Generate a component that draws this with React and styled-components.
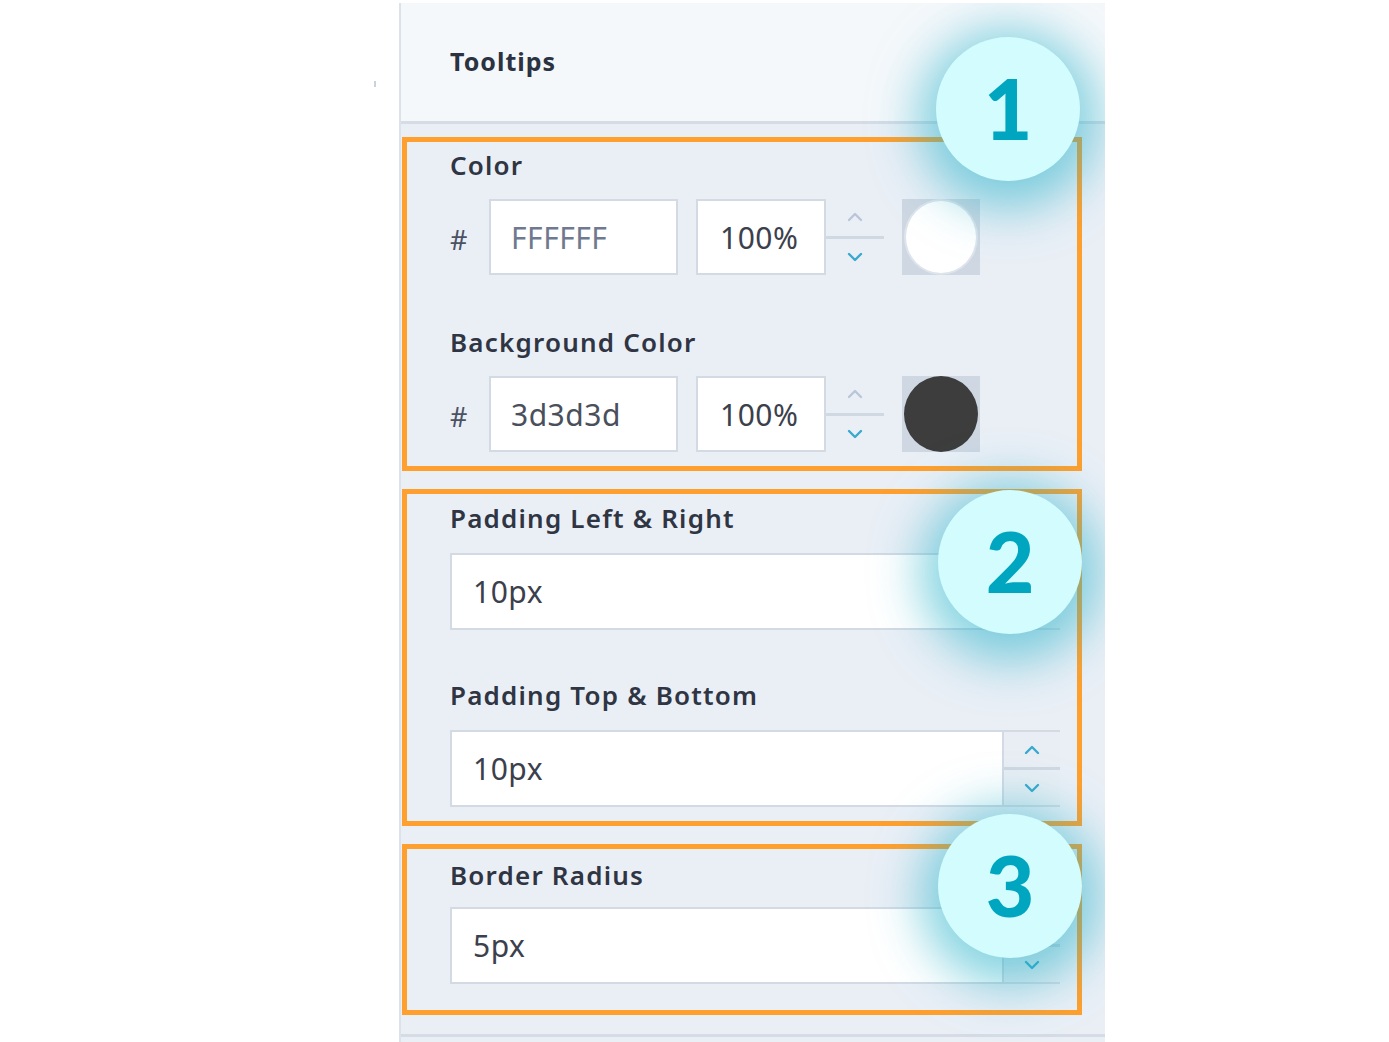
import React from "react";
import styled, { createGlobalStyle } from "styled-components";

const GlobalStyle = createGlobalStyle`
  html, body {
    margin: 0;
    padding: 0;
    background: #ffffff;
  }
  body {
    font-family: "Noto Sans", "DejaVu Sans", sans-serif;
  }
  * {
    box-sizing: border-box;
  }
`;

const Page = styled.div`
  display: flex;
  padding: 3px 0 0 399px;
  min-height: 1042px;
  position: relative;
`;

const StrayMark = styled.span`
  position: absolute;
  left: 374px;
  top: 81px;
  width: 2px;
  height: 6px;
  background: #c9d2de;
`;

const Panel = styled.div`
  position: relative;
  width: 706px;
  height: 1039px;
  border-left: 2px solid #dce2ea;
  background: #eaeff6;
  overflow: hidden;
`;

const Header = styled.div`
  height: 121px;
  display: flex;
  align-items: center;
  padding-left: 49px;
  background: #f5f8fb;
  border-bottom: 3px solid #d5dce6;
`;

const Title = styled.h2`
  margin: 0 0 2px;
  font-size: 25px;
  font-weight: 700;
  letter-spacing: 1px;
  color: #2b3241;
`;

const Body = styled.div`
  display: flex;
  flex-direction: column;
  gap: 18px;
  padding-top: 13px;
`;

const Annot = styled.section`
  margin-left: 1px;
  width: 680px;
  border: 5px solid #ff9f2d;
  display: flex;
  flex-direction: column;
  gap: ${(p) => p.$gap || 50}px;
  padding: ${(p) => p.$pad || "8px 0 14px 43px"};
`;

const Field = styled.div`
  display: flex;
  flex-direction: column;
`;

const Label = styled.label`
  font-size: 26px;
  line-height: 30px;
  font-weight: 600;
  letter-spacing: 1.2px;
  color: #2f3543;
  margin-bottom: ${(p) => p.$gap || 19}px;
`;

const ColorRow = styled.div`
  display: flex;
  align-items: center;
  height: 76px;
`;

const Hash = styled.span`
  width: 39px;
  font-size: 27px;
  color: #4b5263;
  padding-top: 4px;
`;

const Box = styled.div`
  height: ${(p) => p.$h || 76}px;
  width: ${(p) => p.$w}px;
  background: #ffffff;
  border: 2px solid #d3dae4;
  display: flex;
  align-items: center;
  padding-left: ${(p) => p.$pl || 20}px;
  font-size: 30px;
  letter-spacing: 0.5px;
  color: ${(p) => p.$c || "#3b404c"};
  margin-right: ${(p) => p.$mr || 0}px;
`;

const Spinner = styled.div`
  width: 58px;
  height: 76px;
  display: flex;
  flex-direction: column;
  margin-right: 18px;
`;

const SpinHalf = styled.div`
  flex: 1;
  display: flex;
  align-items: center;
  justify-content: center;
`;

const SpinLine = styled.div`
  height: 3px;
  background: #d0d8e2;
`;

const Swatch = styled.div`
  width: 78px;
  height: 76px;
  background: #ced7e2;
  display: flex;
  align-items: center;
  justify-content: center;
`;

const Dot = styled.div`
  width: 74px;
  height: 76px;
  border-radius: 50%;
  background: ${(p) => p.$fill};
  border: 2px solid ${(p) => (p.$fill === "#ffffff" ? "#dde4ec" : p.$fill)};
`;

const NumberInput = styled.div`
  width: 610px;
  height: 77px;
  display: flex;
  border: 2px solid #d3dae4;
  border-right: none;
`;

const NumberText = styled.div`
  flex: 1;
  background: #ffffff;
  display: flex;
  align-items: center;
  padding-left: 21px;
  font-size: 30px;
  letter-spacing: 0.5px;
  color: #3b404c;
  border-right: 2px solid #d3dae4;
`;

const NumberSpin = styled.div`
  width: 56px;
  display: flex;
  flex-direction: column;
  background: #e9eef4;
`;

const FooterLine = styled.div`
  margin-top: 19px;
  border-top: 3px solid #d5dce6;
`;

const Callout = styled.div`
  position: absolute;
  left: ${(p) => p.$x}px;
  top: ${(p) => p.$y}px;
  width: 144px;
  height: 144px;
  border-radius: 50%;
  background: #d2fcfd;
  box-shadow: 0 10px 48px 18px rgba(34, 176, 200, 0.55);
  display: flex;
  align-items: center;
  justify-content: center;
  font-family: "Lato", "Noto Sans", sans-serif;
  font-size: 84px;
  font-weight: 900;
  color: #00a6bf;
  padding-bottom: 4px;
`;

function Chevron({ up, color }) {
  return (
    <svg width="16" height="10" viewBox="0 0 16 10">
      <polyline
        points={up ? "2,8 8,2 14,8" : "2,2 8,8 14,2"}
        fill="none"
        stroke={color}
        strokeWidth="2.4"
        strokeLinecap="round"
        strokeLinejoin="round"
      />
    </svg>
  );
}

function ColorField({ label, hex, hexColor, fill, labelGap }) {
  return (
    <Field>
      <Label $gap={labelGap}>{label}</Label>
      <ColorRow>
        <Hash>#</Hash>
        <Box $w={189} $c={hexColor} $mr={18}>
          {hex}
        </Box>
        <Box $w={130} $pl={22}>
          100%
        </Box>
        <Spinner>
          <SpinHalf>
            <Chevron up color="#bac6d8" />
          </SpinHalf>
          <SpinLine />
          <SpinHalf>
            <Chevron color="#39a9cc" />
          </SpinHalf>
        </Spinner>
        <Swatch>
          <Dot $fill={fill} />
        </Swatch>
      </ColorRow>
    </Field>
  );
}

function PxField({ label, value, labelGap }) {
  return (
    <Field>
      <Label $gap={labelGap}>{label}</Label>
      <NumberInput>
        <NumberText>{value}</NumberText>
        <NumberSpin>
          <SpinHalf>
            <Chevron up color="#39a9cc" />
          </SpinHalf>
          <SpinLine />
          <SpinHalf>
            <Chevron color="#39a9cc" />
          </SpinHalf>
        </NumberSpin>
      </NumberInput>
    </Field>
  );
}

export default function App() {
  return (
    <>
      <GlobalStyle />
      <Page>
        <StrayMark />
        <Panel>
          <Header>
            <Title>Tooltips</Title>
          </Header>
          <Body>
            <Annot $gap={52}>
              <ColorField
                label="Color"
                hex="FFFFFF"
                hexColor="#6f7a8e"
                fill="#ffffff"
              />
              <ColorField
                label="Background Color"
                hex="3d3d3d"
                hexColor="#4a4f5c"
                fill="#3d3d3d"
              />
            </Annot>
            <Annot $gap={50} $pad="9px 0 14px 43px">
              <PxField label="Padding Left & Right" value="10px" labelGap={20} />
              <PxField label="Padding Top & Bottom" value="10px" labelGap={20} />
            </Annot>
            <Annot $pad="11px 0 26px 43px">
              <PxField label="Border Radius" value="5px" labelGap={17} />
            </Annot>
          </Body>
          <FooterLine />
          <Callout $x={535} $y={34}>1</Callout>
          <Callout $x={537} $y={487}>2</Callout>
          <Callout $x={537} $y={811}>3</Callout>
        </Panel>
      </Page>
    </>
  );
}
